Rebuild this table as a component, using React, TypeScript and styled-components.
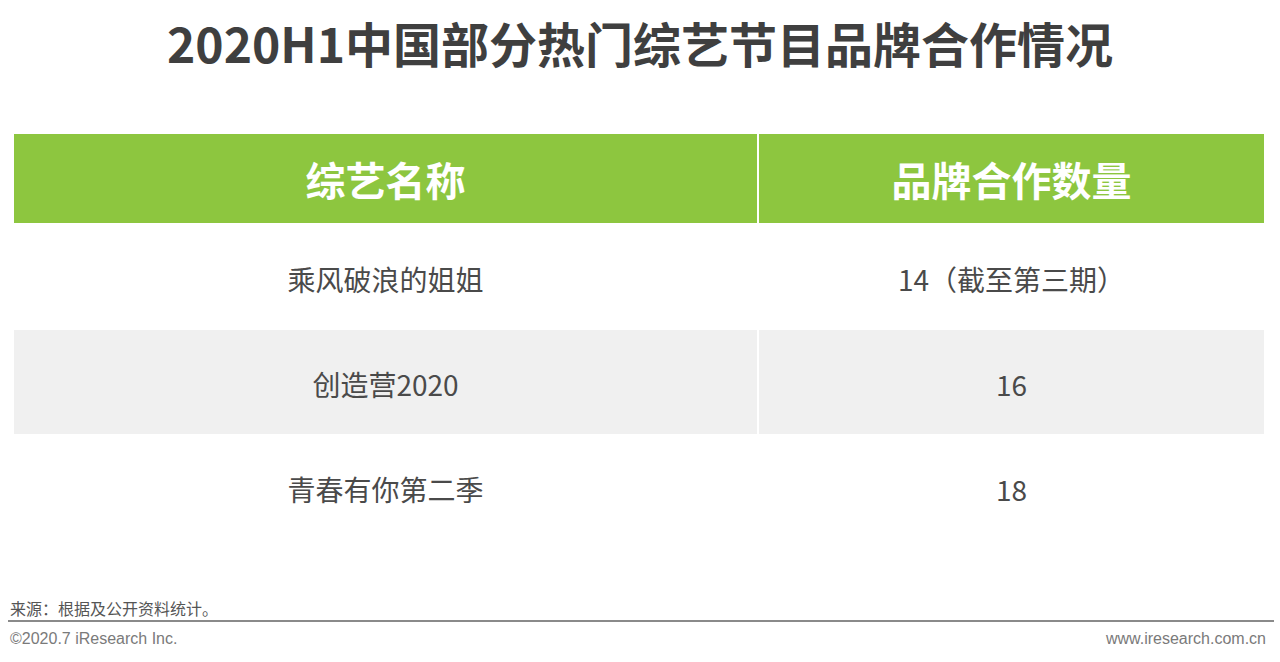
import styled, { createGlobalStyle } from 'styled-components';

const GlobalStyle = createGlobalStyle`
    html, body {
        margin: 0;
        padding: 0;
        background: #ffffff;
    }
    body {
        font-family: "Noto Sans CJK SC", "Noto Sans", sans-serif;
    }
`;

const rows = [
    { name: '乘风破浪的姐姐', count: '14（截至第三期）', shaded: false },
    { name: '创造营2020', count: '16', shaded: true },
    { name: '青春有你第二季', count: '18', shaded: false },
];

export default function App() {
    return (
        <Page>
            <GlobalStyle />
            <Title>2020H1中国部分热门综艺节目品牌合作情况</Title>
            <Table>
                <HeadCell>综艺名称</HeadCell>
                <HeadCell>品牌合作数量</HeadCell>
                {rows.map((row, index) => (
                    <Row key={index} $shaded={row.shaded}>
                        <Cell>{row.name}</Cell>
                        <Cell>{row.count}</Cell>
                    </Row>
                ))}
            </Table>
            <Footer>
                <Source>来源：根据及公开资料统计。</Source>
                <Divider />
                <Bottom>
                    <Small>©2020.7 iResearch Inc.</Small>
                    <Small>www.iresearch.com.cn</Small>
                </Bottom>
            </Footer>
        </Page>
    );
}

const Page = styled.div`
    display: flex;
    flex-direction: column;
    width: 1280px;
    height: 662px;
    overflow: hidden;
`;

const Title = styled.h1`
    margin: 0;
    height: 84px;
    line-height: 84px;
    text-align: center;
    font-size: 48px;
    font-weight: 700;
    color: #3f3f3f;
`;

const Table = styled.div`
    display: grid;
    grid-template-columns: 743px 505px;
    grid-template-rows: 89px 107px 104px 106px;
    column-gap: 2px;
    margin: 50px 16px 0 14px;
    width: 1250px;
`;

const HeadCell = styled.div`
    display: flex;
    align-items: center;
    justify-content: center;
    background: #8dc63f;
    color: #ffffff;
    font-size: 40px;
    font-weight: 700;
`;

const Row = styled.div<{ $shaded: boolean }>`
    display: contents;
    & > div {
        background: ${p => (p.$shaded ? '#f0f0f0' : '#ffffff')};
    }
`;

const Cell = styled.div`
    display: flex;
    align-items: center;
    justify-content: center;
    padding-top: 4px;
    font-size: 28px;
    color: #4a4a4a;
`;

const Footer = styled.div`
    display: flex;
    flex-direction: column;
    margin-top: 58px;
    padding: 0 8px 0 10px;
`;

const Source = styled.div`
    font-size: 16px;
    line-height: 20px;
    color: #555555;
`;

const Divider = styled.div`
    height: 2px;
    background: #8a8a8a;
    margin: 2px -2px 0 -2px;
`;

const Bottom = styled.div`
    display: flex;
    justify-content: space-between;
    padding: 7px 6px 0 0;
`;

const Small = styled.span`
    font-family: "Liberation Sans", Arial, sans-serif;
    font-size: 16px;
    line-height: 19px;
    color: #7a7a7a;
`;
